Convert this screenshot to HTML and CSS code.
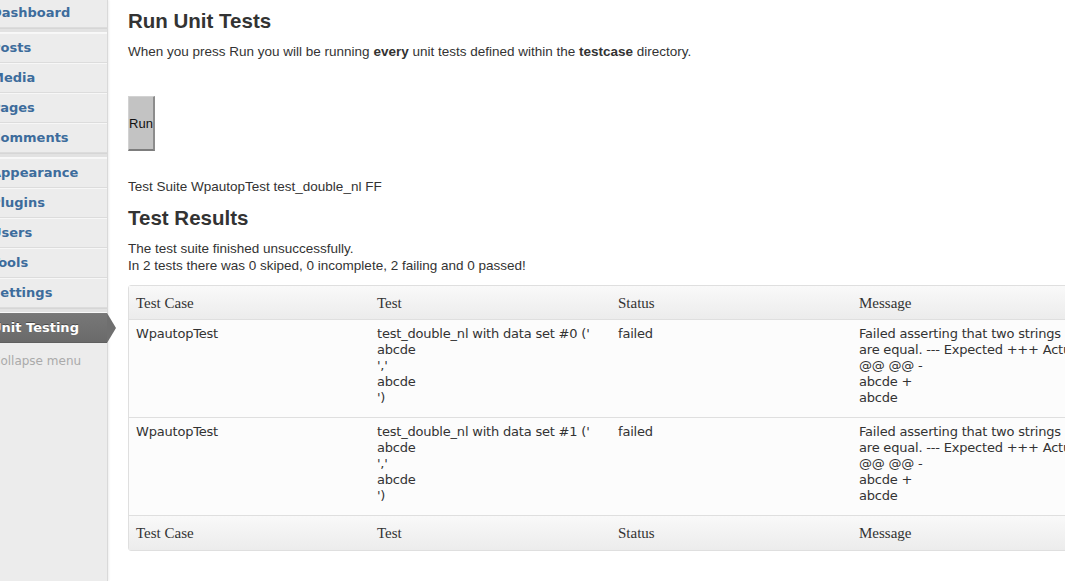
FILE: index.html
```html
<!DOCTYPE html>
<html lang="en">
<head>
<meta charset="utf-8">
<title>Run Unit Tests</title>
<link rel="stylesheet" href="styles.css">
</head>
<body>
<div class="layout">
  <nav class="sidebar">
    <ul class="menu">
      <li class="item"><a href="#"><span>Dashboard</span></a></li>
      <li class="sep"></li>
      <li class="item"><a href="#"><span>Posts</span></a></li>
      <li class="item"><a href="#"><span>Media</span></a></li>
      <li class="item"><a href="#"><span>Pages</span></a></li>
      <li class="item"><a href="#"><span>Comments</span></a></li>
      <li class="sep"></li>
      <li class="item"><a href="#"><span>Appearance</span></a></li>
      <li class="item"><a href="#"><span>Plugins</span></a></li>
      <li class="item"><a href="#"><span>Users</span></a></li>
      <li class="item"><a href="#"><span>Tools</span></a></li>
      <li class="item"><a href="#"><span>Settings</span></a></li>
      <li class="sep"></li>
      <li class="item current"><a href="#"><span>Unit Testing</span></a></li>
      <li class="collapse"><span>Collapse menu</span></li>
    </ul>
  </nav>
  <main class="main">
    <h2 class="title">Run Unit Tests</h2>
    <p class="intro">When you press Run you will be running <strong>every</strong> unit tests defined within the <strong>testcase</strong> directory.</p>
    <div class="actions"><button class="run" type="button">Run</button></div>
    <p class="suite">Test Suite WpautopTest test_double_nl FF</p>
    <h2 class="results">Test Results</h2>
    <p class="summary">The test suite finished unsuccessfully.<br>In 2 tests there was 0 skiped, 0 incomplete, 2 failing and 0 passed!</p>
    <table class="grid">
      <colgroup><col class="c"><col class="c"><col class="c"><col class="c"></colgroup>
      <thead>
        <tr><th>Test Case</th><th>Test</th><th>Status</th><th>Message</th></tr>
      </thead>
      <tbody>
        <tr>
          <td>WpautopTest</td>
          <td>test_double_nl with data set #0 ('<br>abcde<br>','<br>abcde<br>')</td>
          <td>failed</td>
          <td class="msg">Failed asserting that two strings<br>are equal. --- Expected +++ Actual<br>@@ @@ -<br>abcde +<br>abcde</td>
        </tr>
        <tr>
          <td>WpautopTest</td>
          <td>test_double_nl with data set #1 ('<br>abcde<br>','<br>abcde<br>')</td>
          <td>failed</td>
          <td class="msg">Failed asserting that two strings<br>are equal. --- Expected +++ Actual<br>@@ @@ -<br>abcde +<br>abcde</td>
        </tr>
      </tbody>
      <tfoot>
        <tr><th>Test Case</th><th>Test</th><th>Status</th><th>Message</th></tr>
      </tfoot>
    </table>
  </main>
</div>
</body>
</html>
```

FILE: styles.css
```css
html, body {
  margin: 0;
  padding: 0;
  background: #fff;
  overflow: hidden;
}
body {
  width: 1065px;
  height: 581px;
  font-family: "Liberation Sans", Arial, sans-serif;
  font-size: 13.5px;
  color: #333;
}
.layout {
  display: flex;
  height: 581px;
}
.sidebar {
  width: 107px;
  flex-shrink: 0;
  background: #ececec;
  border-right: 1px solid #d9d9d9;
  box-shadow: 1px 0 2px rgba(0, 0, 0, 0.07);
  position: relative;
  z-index: 2;
}
.menu {
  list-style: none;
  margin: -2px 0 0;
  padding: 0;
}
.item a {
  display: block;
  height: 28px;
  line-height: 28px;
  border-top: 1px solid #f7f7f7;
  border-bottom: 1px solid #dcdcdc;
  font-family: "DejaVu Sans", Verdana, sans-serif;
  font-weight: bold;
  font-size: 13px;
  color: #3d6c9c;
  text-decoration: none;
  white-space: nowrap;
}
.item a span {
  margin-left: -9px;
}
.sep {
  height: 3px;
  border-top: 1px solid #d6d6d6;
  border-bottom: 1px solid #f8f8f8;
  background: #e2e2e2;
}
.item.current a {
  position: relative;
  background: linear-gradient(#777777, #6a6a6a);
  border-top: 1px solid #7a7a7a;
  border-bottom: 1px solid #5f5f5f;
  color: #fff;
  text-shadow: 0 -1px 0 rgba(0, 0, 0, 0.35);
}
.item.current a::after {
  content: "";
  position: absolute;
  right: -9px;
  top: -1px;
  border-left: 9px solid #6f6f6f;
  border-top: 15px solid transparent;
  border-bottom: 15px solid transparent;
}
.collapse {
  padding-top: 8px;
  line-height: 20px;
  font-family: "DejaVu Sans", Verdana, sans-serif;
  font-size: 12px;
  color: #aaa;
  white-space: nowrap;
}
.collapse span {
  margin-left: -8px;
}
.main {
  padding: 9px 0 0 20px;
  flex: 1;
  min-width: 0;
}
.title, .results {
  margin: 0;
  font-size: 20.5px;
  line-height: 24px;
  font-weight: bold;
  color: #333;
}
.intro {
  margin: 10px 0 0;
  line-height: 17px;
}
.actions {
  margin-top: 36px;
  display: flex;
}
.run {
  width: 27px;
  height: 55px;
  padding: 0;
  margin: 0;
  background: #c3c3c3;
  border-style: solid;
  border-width: 1px 2px 2px 1px;
  border-color: #d2d2d2 #8c8c8c #7d7d7d #d2d2d2;
  font-family: "Liberation Sans", Arial, sans-serif;
  font-size: 13px;
  color: #111;
}
.suite {
  margin: 27px 0 0;
  line-height: 17px;
}
.results {
  margin-top: 11px;
}
.summary {
  margin: 10px 0 0;
  line-height: 17px;
}
.grid {
  margin-top: 11px;
  width: 966px;
  table-layout: fixed;
  border-collapse: separate;
  border-spacing: 0;
  border: 1px solid #dfdfdf;
  border-radius: 3px;
  background: #fcfcfc;
}
.grid col.c {
  width: 241px;
}
.grid th {
  height: 33px;
  padding: 0 7px;
  text-align: left;
  font-family: "Liberation Serif", Georgia, serif;
  font-size: 15px;
  font-weight: normal;
  line-height: 20px;
  color: #333;
  background: linear-gradient(#f9f9f9, #ececec);
}
.grid thead th {
  border-bottom: 1px solid #dfdfdf;
}
.grid tfoot th {
  height: 34px;
}
.grid td {
  padding: 6px 7px 11px;
  vertical-align: top;
  font-family: "DejaVu Sans", Verdana, sans-serif;
  font-size: 13px;
  letter-spacing: -0.2px;
  line-height: 16px;
  color: #333;
  border-bottom: 1px solid #dfdfdf;
}
.grid td.msg {
  white-space: nowrap;
}
```
